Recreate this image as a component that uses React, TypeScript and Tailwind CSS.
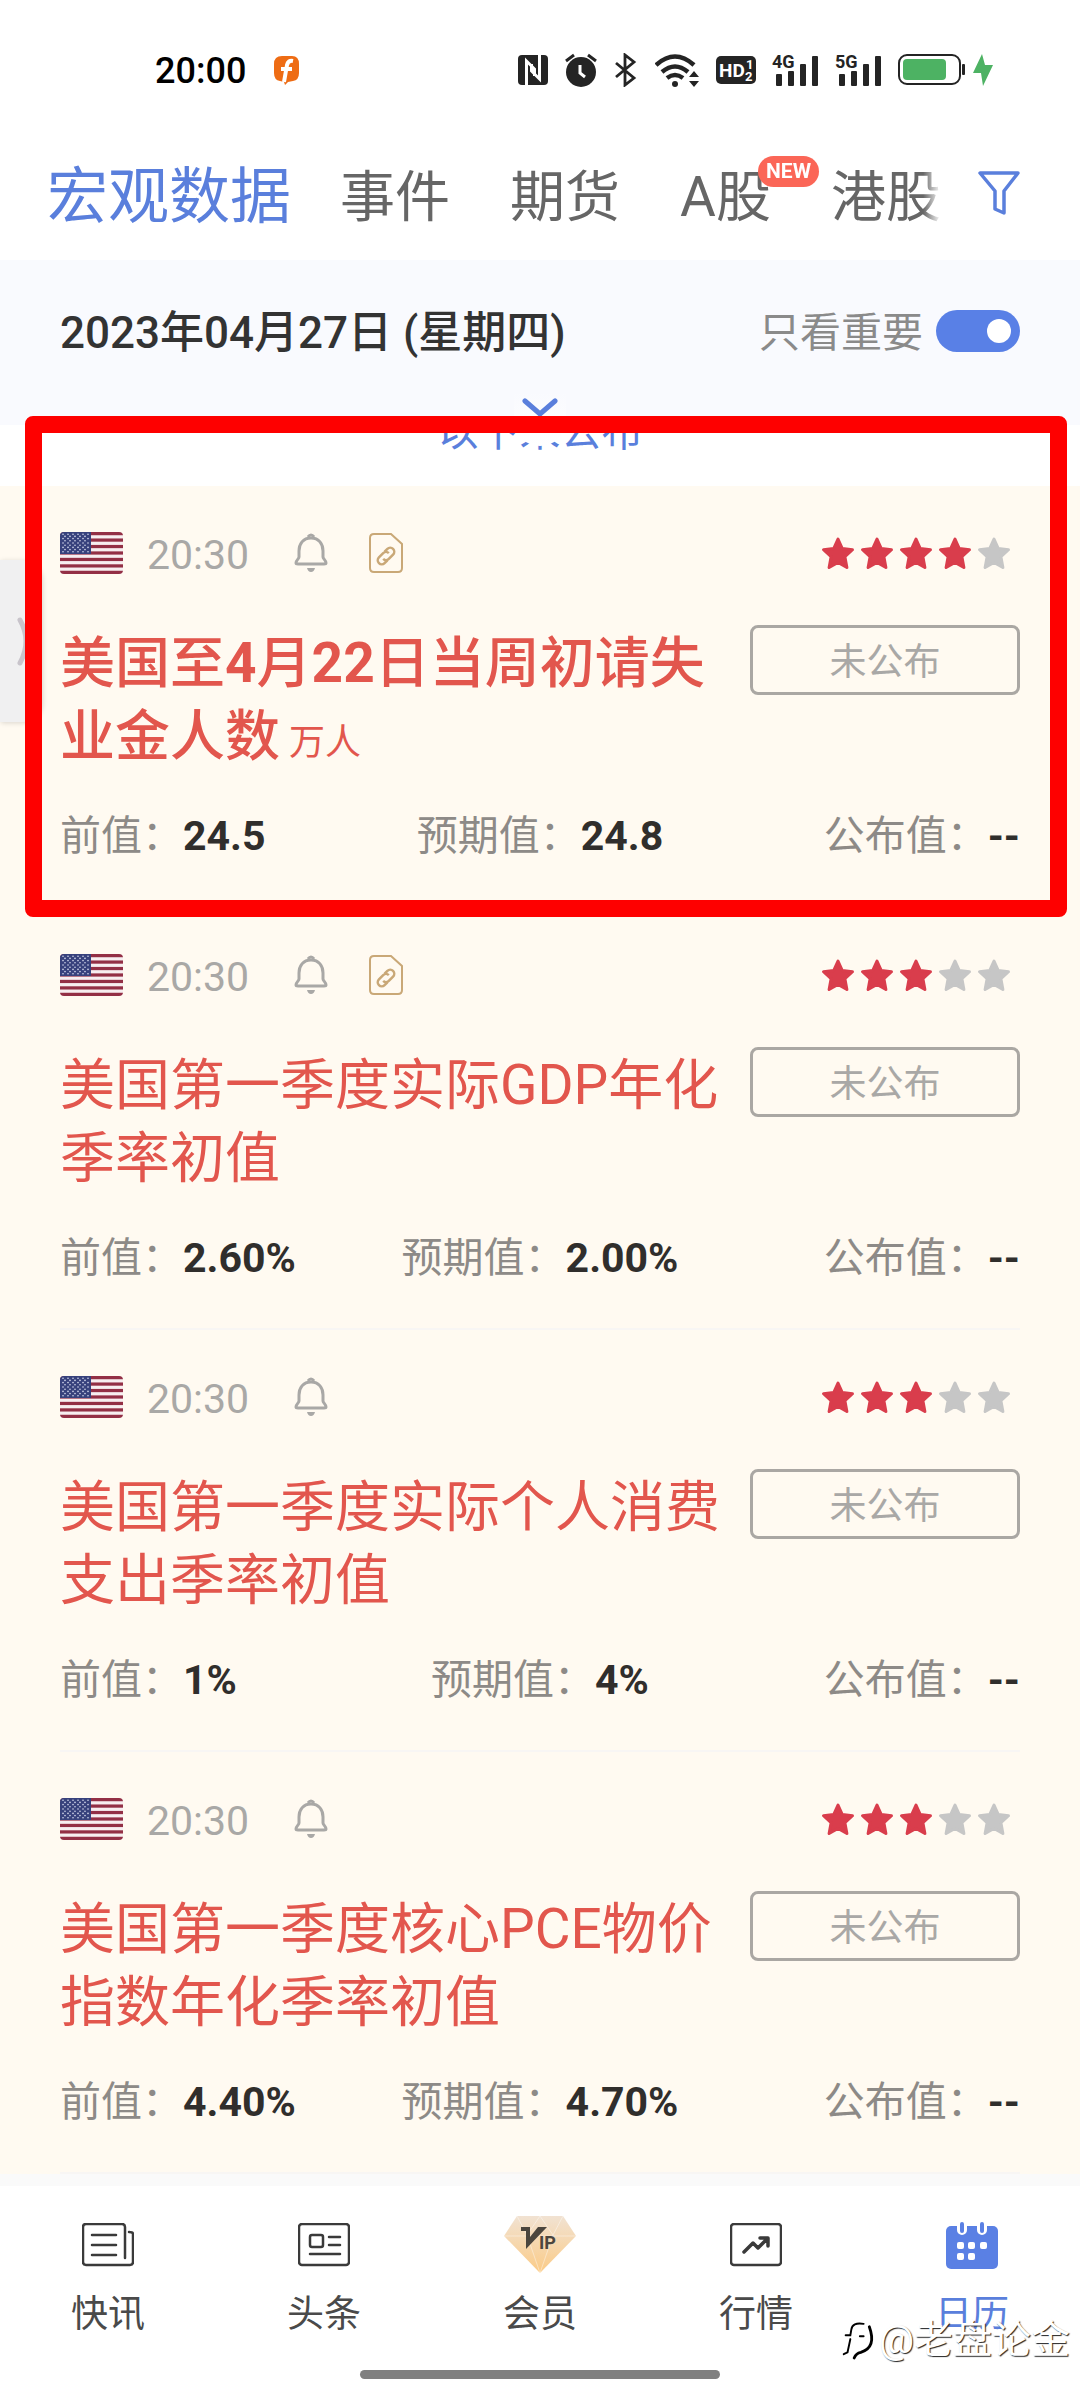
import { useState } from 'react'

type Item = {
  title: string
  unit?: string
  bold?: boolean
  report?: boolean
  stars: number
  prev: string
  forecast: string
}

const TABS = ['宏观数据', '事件', '期货', 'A股', '港股']

const ITEMS: Item[] = [
  {
    title: '美国至4月22日当周初请失业金人数',
    unit: '万人',
    bold: true,
    report: true,
    stars: 4,
    prev: '24.5',
    forecast: '24.8',
  },
  { title: '美国第一季度实际GDP年化季率初值', report: true, stars: 3, prev: '2.60%', forecast: '2.00%' },
  { title: '美国第一季度实际个人消费支出季率初值', stars: 3, prev: '1%', forecast: '4%' },
  { title: '美国第一季度核心PCE物价指数年化季率初值', stars: 3, prev: '4.40%', forecast: '4.70%' },
]

function Signal({ label }: { label: string }) {
  return (
    <svg className="overflow-visible" width="47" height="34" viewBox="0 0 47 34" fill="#242424">
      <text x="0" y="15" fontSize="18" fontWeight="700">
        {label}
      </text>
      <rect x="4" y="21" width="6" height="12" rx="1" />
      <rect x="16" y="18" width="6" height="15" rx="1" />
      <rect x="28" y="11" width="6" height="22" rx="1" />
      <rect x="40" y="3" width="6" height="30" rx="1" />
    </svg>
  )
}

function StatusBar() {
  return (
    <div className="flex h-[130px] items-center pt-[10px] pr-[87px] pl-[155px]">
      <span className="pt-0.5 text-[36px] leading-[40px] font-medium text-black">20:00</span>
      <svg className="ml-7" width="26" height="30" viewBox="0 0 26 30">
        <path d="M8 1h10q7 0 7 8v9q0 7-6 8l-5 1-3 3-1-3-4-1q-6-1-6-8V9q0-8 8-8z" fill="#ee6c14" />
        <path d="M19 6q-5-1-6 4l-3 17M7 14h11" fill="none" stroke="#fff" strokeWidth="4" />
      </svg>
      <div className="ml-auto flex items-center gap-4">
        <svg width="31" height="32" viewBox="0 0 31 32">
          <rect y="1" width="30" height="30" rx="4" fill="#242424" />
          <path d="M8.500 31V7l8 8v7" fill="none" stroke="#fff" strokeWidth="3" />
          <path d="M21.500 1v24l-8-8v-7" fill="none" stroke="#fff" strokeWidth="3" />
        </svg>
        <svg width="34" height="34" viewBox="0 0 34 34" fill="none">
          <circle cx="16" cy="19" r="15" fill="#242424" />
          <path d="M1 8l8-6M31 8l-8-6" stroke="#242424" strokeWidth="3" />
          <path d="M15 12v8l5 4" stroke="#fff" strokeWidth="3" />
        </svg>
        <svg width="24" height="34" viewBox="0 0 24 34" fill="none" stroke="#242424" strokeWidth="2.800">
          <path d="M1 10l18 15-9 7V2l9 7L1 24" />
        </svg>
        <svg width="45" height="34" viewBox="0 0 45 34" fill="none" stroke="#242424" strokeWidth="4.500">
          <path d="M1 12q19-17 38 0" />
          <path d="M7 19q13-11 26 0" />
          <path d="M12 25q8-6 16 0" />
          <circle cx="20" cy="31" r="3" fill="#242424" stroke="none" />
          <path d="M34 24l5-6 5 6zM34 28l5 6 5-6z" fill="#242424" stroke="none" />
        </svg>
        <svg width="40" height="28" viewBox="0 0 40 28">
          <rect width="40" height="28" rx="5" fill="#242424" />
          <g fill="#fff" fontWeight="700">
            <text x="3" y="21" fontSize="19">
              HD
            </text>
            <text x="30" y="13" fontSize="13">
              1
            </text>
            <text x="29" y="25" fontSize="13">
              2
            </text>
          </g>
        </svg>
        <Signal label="4G" />
        <Signal label="5G" />
        <div className="flex items-center gap-2">
          <svg width="67" height="32" viewBox="0 0 67 32">
            <rect x="1" y="1" width="61" height="29" rx="8" fill="none" stroke="#242424" strokeWidth="2" />
            <rect x="5" y="5" width="43" height="21" rx="4" fill="#4db263" />
            <rect x="64" y="10" width="3" height="11" rx="1" fill="#242424" />
          </svg>
          <svg width="20" height="32" viewBox="0 0 20 32" fill="#4db263">
            <path d="M9 0L0 19h8l2 13 10-21h-8z" />
          </svg>
        </div>
      </div>
    </div>
  )
}

function Flag() {
  return (
    <svg className="rounded-[4px]" width="63" height="42" viewBox="0 0 63 42" role="img" aria-label="美国">
      <rect width="63" height="42" fill="#f7eef0" />
      {[0, 1, 2, 3, 4, 5, 6].map((n) => (
        <rect key={n} y={n * 6.46} width="63" height="3.23" fill="#932f45" />
      ))}
      <rect width="31" height="22" fill="#37417c" />
      {[0, 1, 2, 3, 4, 5, 6, 7, 8].map((r) =>
        (r % 2 ? [5, 10, 15, 20, 25] : [3, 8, 13, 18, 23, 28]).map((x) => (
          <circle key={`${r}-${x}`} cx={x} cy={2.2 + r * 2.2} r="0.8" fill="#d5d9ee" />
        ))
      )}
    </svg>
  )
}

function Bell() {
  return (
    <svg width="34" height="40" viewBox="0 0 34 40" fill="none" stroke="#a9a8a6" strokeWidth="3" strokeLinejoin="round">
      <path d="M17 5C9 5 5 11 5 18v6c0 2-3 3-3 6q0 1 2 1h26q2 0 2-1c0-3-3-4-3-6v-6c0-7-4-13-12-13z" />
      <path d="M14 4q3-4 6 0" />
      <path d="M13 35h8q-1 4-4 4t-4-4z" fill="#a9a8a6" stroke="none" />
    </svg>
  )
}

function ReportDoc() {
  return (
    <svg width="34" height="40" viewBox="0 0 34 40" fill="none" stroke="#c9a877" strokeWidth="2">
      <path d="M5 1h17l11 10v24q0 4-4 4H5q-4 0-4-4V5q0-4 4-4z" />
      <g transform="rotate(-45 17 23)" strokeWidth="2.500">
        <path d="M15 27h-4a4 4 0 0 1 0-8h6a4 4 0 0 1 4 4" />
        <path d="M19 19h4a4 4 0 0 1 0 8h-6a4 4 0 0 1-4-4" />
      </g>
    </svg>
  )
}

function Stars({ count }: { count: number }) {
  return (
    <div className="mr-2 ml-auto flex gap-1" role="img" aria-label={`${count}/5`}>
      {[1, 2, 3, 4, 5].map((n) => (
        <svg
          key={n}
          width="35"
          height="35"
          viewBox="0 0 35 35"
          className={n <= count ? 'fill-[#d93d4c] stroke-[#d93d4c]' : 'fill-[#c6c6c6] stroke-[#c6c6c6]'}
          strokeWidth="3"
          strokeLinejoin="round"
        >
          <path d="M17 3l4.300 9.500 10.200 1.200-7.600 7 2 10.800-8.900-5-8.900 5 2-10.800-7.600-7 10.200-1.200z" />
        </svg>
      ))}
    </div>
  )
}

// digits in a highlighted title are heavier than the characters around them
function BoldTitle({ text }: { text: string }) {
  return (
    <span className="font-medium">
      {text.split(/(\d+)/).map((part, i) =>
        i % 2 ? (
          <b key={i} className="font-bold">
            {part}
          </b>
        ) : (
          part
        )
      )}
    </span>
  )
}

function EventItem({ item, marked }: { item: Item; marked?: boolean }) {
  return (
    <article className="relative px-[60px]">
      <div className="border-b-2 border-[#f8f6f4] pt-[46px] pb-[45px]">
        <div className="flex h-[42px] items-center">
          <Flag />
          <time className="ml-6 pt-1 text-[41px] leading-[42px] text-[#a9a8a6]">20:30</time>
          <button className="ml-[45px]" aria-label="提醒">
            <Bell />
          </button>
          {item.report && (
            <button className="ml-[41px]" aria-label="解读">
              <ReportDoc />
            </button>
          )}
          <Stars count={item.stars} />
        </div>

        <div className="mt-[51px] flex items-start justify-between">
          <h2 className="w-[666px] pt-0.5 text-[55px] leading-[73px] font-normal text-[#e2564d]">
            {item.bold ? <BoldTitle text={item.title} /> : item.title}
            {item.unit && <span className="ml-[9px] text-[36px] leading-[40px]">{item.unit}</span>}
          </h2>
          <button className="h-[70px] w-[270px] rounded-[8px] border-3 border-[#aaa7a3] pt-1.5 text-[37px] leading-[58px] text-[#a9a8a6]">
            未公布
          </button>
        </div>

        <dl className="mt-[38px] grid grid-cols-[1fr_auto_1fr] text-[41px] leading-[50px] text-[#8d8a87]">
          <div className="flex">
            <dt>前值：</dt>
            <dd className="font-bold text-[#302e2c]">{item.prev}</dd>
          </div>
          <div className="flex">
            <dt>预期值：</dt>
            <dd className="font-bold text-[#302e2c]">{item.forecast}</dd>
          </div>
          <div className="flex justify-end">
            <dt>公布值：</dt>
            <dd className="font-bold text-[#302e2c]">--</dd>
          </div>
        </dl>
      </div>

      {marked && (
        <>
          <button
            className="absolute top-[74px] left-0 h-[162px] w-[42px] rounded-r-[20px] bg-[#f0f0f1] shadow-[1px_1px_5px_rgba(0,0,0,0.15)]"
            aria-label="展开"
          >
            <svg width="42" height="162" viewBox="0 0 42 162" fill="none" stroke="#c8c4cb" strokeWidth="5" strokeLinecap="round">
              <path d="M20 60q12 21 0 43" />
            </svg>
          </button>
          <div className="pointer-events-none absolute -top-[70px] right-[13px] -bottom-[9px] left-[25px] z-20 rounded-[8px] border-[17px] border-[#fe0000]" />
        </>
      )}
    </article>
  )
}

const outline = {
  width: 52,
  height: 44,
  viewBox: '0 0 52 44',
  fill: 'none',
  stroke: '#3a3a3a',
  strokeWidth: 2.5,
  strokeLinejoin: 'round',
  strokeLinecap: 'round',
} as const

const NAV = [
  {
    label: '快讯',
    icon: (
      <svg {...outline}>
        <path d="M43 35V4q0-3-3-3H4Q1 1 1 4v35q0 3 3 3h44q3 0 3-3V11q0-2-4-2M10 12h24M10 22h24M10 32h24" />
      </svg>
    ),
  },
  {
    label: '头条',
    icon: (
      <svg {...outline}>
        <rect x="1" y="1" width="50" height="41" rx="3" />
        <rect x="12" y="12" width="13" height="12" rx="2" />
        <path d="M31 14h11M31 22h11M12 31h30" />
      </svg>
    ),
  },
  {
    label: '会员',
    icon: (
      <svg width="72" height="58" viewBox="0 0 72 58">
        <defs>
          <linearGradient id="gem" x1="0" y1="0" x2="0" y2="1">
            <stop offset="0" stopColor="#f1e2d2" />
            <stop offset="1" stopColor="#fbcb86" />
          </linearGradient>
        </defs>
        <path d="M13 0h46l13 20-36 37L0 20z" fill="url(#gem)" />
        <path d="M13 0l10 19L36 0l13 19L59 0M23 19l13 38 13-38M0 20h72" fill="none" stroke="#fff" strokeOpacity="0.400" />
        <path d="M17 11h9v10l8-10h9L22 33V15h-5z" fill="#4b463e" />
        <text x="35" y="33" fontSize="18" fontWeight="700" fill="#4b463e">
          IP
        </text>
      </svg>
    ),
  },
  {
    label: '行情',
    icon: (
      <svg {...outline}>
        <rect x="1" y="1" width="50" height="41" rx="3" />
        <path d="M14 29l9-9 5 5 9-9M30 15h8v8" strokeWidth="3.500" />
      </svg>
    ),
  },
  {
    label: '日历',
    icon: (
      <svg width="52" height="48" viewBox="0 0 52 48">
        <rect y="5" width="52" height="43" rx="5" fill="#5a80e4" />
        <g strokeLinecap="round">
          <path d="M16 3v6M36 3v6" stroke="#fff" strokeWidth="10" />
          <path d="M16 3v7M36 3v7" stroke="#5a80e4" strokeWidth="4" />
        </g>
        <g fill="#fff">
          <rect x="11" y="21" width="7" height="7" rx="2" />
          <rect x="22" y="21" width="7" height="7" rx="2" />
          <rect x="34" y="21" width="7" height="7" rx="2" />
          <rect x="11" y="32" width="7" height="7" rx="2" />
          <rect x="22" y="32" width="7" height="7" rx="2" />
        </g>
      </svg>
    ),
  },
]

export default function App() {
  const [tab, setTab] = useState(TABS[0])
  const [page, setPage] = useState('日历')
  const [important, setImportant] = useState(true)

  return (
    <div className="min-h-screen bg-white font-['Roboto','Noto_Sans_CJK_SC',sans-serif]">
      <StatusBar />

      <header className="flex h-[130px] items-center justify-between pr-[60px] pl-[47px]">
        <nav className="flex h-full items-center gap-[60px] pt-1 [mask-image:linear-gradient(to_right,#000_98%,transparent)]">
          {TABS.map((name) => (
            <button
              key={name}
              onClick={() => setTab(name)}
              className={`relative ${
                name === tab
                  ? '-mr-[11px] text-[61px] leading-[70px] text-[#5a7fdc]'
                  : 'text-[55px] leading-[70px] text-[#666]'
              }`}
            >
              {name}
              {name === 'A股' && (
                <span className="absolute -top-[6px] left-[78px] rounded-full bg-[#fb6657] px-2 text-[21px] leading-[31px] font-bold text-white">
                  NEW
                </span>
              )}
            </button>
          ))}
        </nav>
        <button className="pb-1" aria-label="筛选">
          <svg width="42" height="44" viewBox="0 0 42 44" fill="none" stroke="#5a7fdc" strokeWidth="3.500" strokeLinejoin="round">
            <path d="M2 2h38L26 20v22l-9-4V20z" />
          </svg>
        </button>
      </header>

      <section className="relative z-10 h-[165px] bg-[#f9fafe] px-[60px]">
        <div className="flex h-[142px] items-center">
          <h1 className="pt-1 text-[44px] leading-[60px] font-medium text-[#333]">2023年04月27日 (星期四)</h1>
          <label htmlFor="important" className="mr-[13px] ml-auto pt-1 text-[41px] leading-[60px] text-[#8a8a8a]">
            只看重要
          </label>
          <input
            id="important"
            type="checkbox"
            role="switch"
            checked={important}
            onChange={(e) => setImportant(e.target.checked)}
            className="flex h-[42px] w-[84px] appearance-none items-center rounded-full bg-[#c6c6c6] px-[9px] before:size-6 before:rounded-full before:bg-white checked:justify-end checked:bg-[#5980e6]"
          />
        </div>
        <button
          className="absolute top-[132px] left-1/2 flex h-[54px] w-[52px] -translate-x-1/2 justify-center rounded-b-full bg-linear-to-b from-[#f9fafe] to-white pt-[5px]"
          aria-label="展开日期"
        >
          <svg className="shrink-0" width="38" height="20" viewBox="0 0 38 20" fill="none" stroke="#5a7fdc" strokeWidth="5" strokeLinecap="round">
            <path d="M4 4l15 13L34 4" />
          </svg>
        </button>
      </section>

      <main>
        <p className="-mt-[26px] h-[87px] text-center text-[41px] leading-[66px] text-[#5a7fdc]">以下未公布</p>
        <div className="bg-[#fffaf1]">
          {ITEMS.map((item, i) => (
            <EventItem key={item.title} item={item} marked={i === 0} />
          ))}
        </div>
      </main>

      <footer className="relative border-t-12 border-[#fafafa] pb-[21px]">
        <nav className="grid grid-cols-5 pt-7">
          {NAV.map(({ label, icon }) => (
            <button
              key={label}
              onClick={() => setPage(label)}
              className={`flex flex-col items-center text-[37px] leading-[50px] ${
                label === page ? 'text-[#5a7fdc]' : 'text-[#4a4a4a]'
              }`}
            >
              <span className="flex h-[62px] items-center">{icon}</span>
              <span className="mt-3.5">{label}</span>
            </button>
          ))}
        </nav>
        <div className="mx-auto mt-[30px] h-[9px] w-1/3 rounded-full bg-[#808080]" />
        <div className="absolute right-[10px] bottom-[36px] flex items-center gap-1 text-white [text-shadow:1px_1px_1px_#222]">
          <svg width="36" height="40" viewBox="0 0 38 40" fill="none" strokeLinecap="round">
            <path d="M26 3q-12-2-13 6l-1 6H7M12 19l-3 14-4 2M22 16h4" stroke="#000" strokeWidth="2" />
            <path d="M32 6q8 22-9 27-5 1-7 6" stroke="#000" strokeWidth="3" />
          </svg>
          <span className="text-[39px] leading-[48px]">@老盘论金</span>
        </div>
      </footer>
    </div>
  )
}
